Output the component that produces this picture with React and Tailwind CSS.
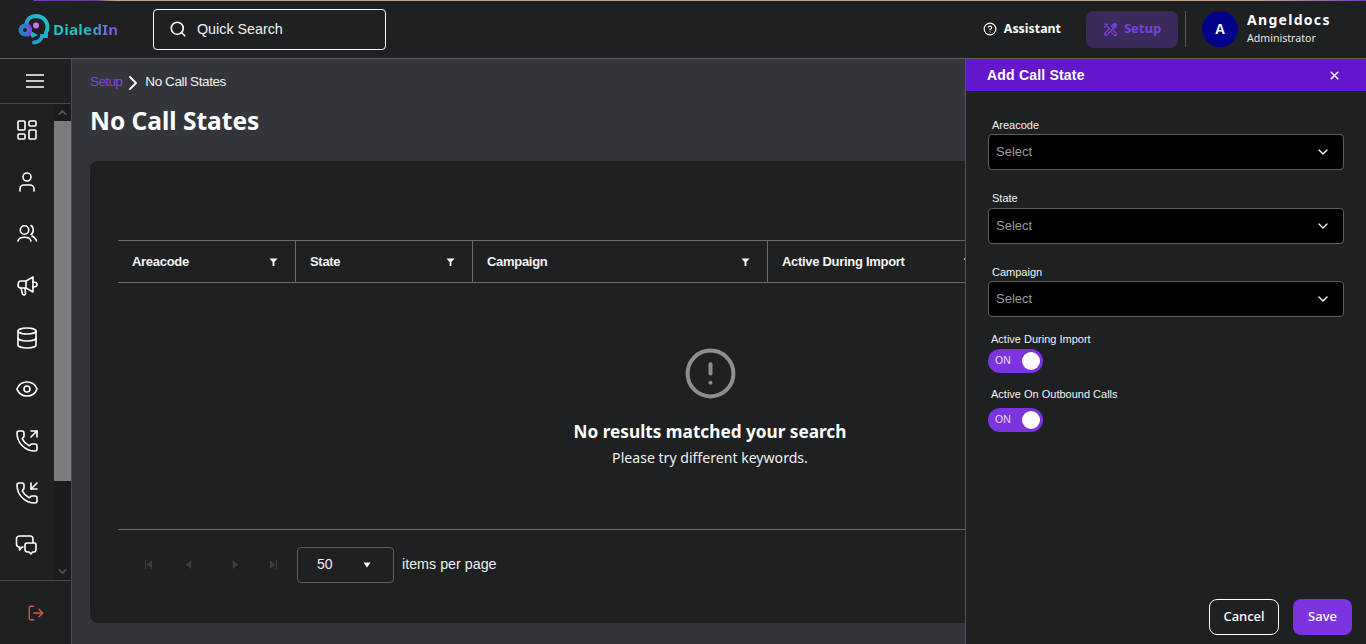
import React from "react";
import {
  Search, CircleHelp, LayoutDashboard, User, Database, Eye,
  PhoneOutgoing, PhoneIncoming, LogOut, ChevronRight, ChevronDown, ChevronUp,
  X, CircleAlert,
} from "lucide-react";

const arial = "font-['Liberation_Sans',Arial,sans-serif]";
const ubuntu = "font-['Noto_Sans',sans-serif]";

function Logo() {
  return (
    <svg width="32" height="31" viewBox="0 0 32 31" fill="none">
      <defs>
        <linearGradient id="lg" x1="0" y1="1" x2="1" y2="0">
          <stop offset="0" stopColor="#2f8fd0" />
          <stop offset="1" stopColor="#1cc5c9" />
        </linearGradient>
      </defs>
      <path d="M8 11 C9 5 13 2 18 2 C25 2 29.500 7 29.500 13 C29.500 15 29 17 28 18.500 L28 22 L24 22 C23.500 25 21 28 16 28.500" stroke="url(#lg)" strokeWidth="3.800" strokeLinecap="round" />
      <path d="M9 15 L20 21 L14 24 Z" fill="#1cb5c9" />
      <circle cx="7" cy="16" r="6.500" fill="#2d7fc4" />
      <path d="M9 10.500 A6 6 0 0 1 9 21.500" stroke="#8b3fe0" strokeWidth="3" />
      <circle cx="18" cy="11.500" r="3" fill="#c678f0" />
      <circle cx="7" cy="16" r="2" fill="#1e2022" />
    </svg>
  );
}

function DrawnIcon({ children }) {
  return (
    <svg width="24" height="24" viewBox="0 0 24 24" fill="none" stroke="currentColor" strokeWidth="1.6" strokeLinecap="round" strokeLinejoin="round" className="text-white">
      {children}
    </svg>
  );
}

const UsersIcon = () => (
  <DrawnIcon>
    <circle cx="9.500" cy="8" r="4.200" />
    <path d="M3 19 C4 14 15 14 16 19" />
    <path d="M16 3.500 C19 5 19 11 16 12.500" />
    <path d="M17 14 C19 15 21 17 21.500 19" />
  </DrawnIcon>
);

const MegaphoneIcon = () => (
  <DrawnIcon>
    <path d="M3.500 9 C3.500 7.500 5 7 6 7 L11 7 L18 3 L18 18 L11 14 L6 14 C4 14 3 13 3 11 Z" />
    <path d="M18 8 C21 8 22 9 22 10.500 C22 12 21 13 18 13" />
    <path d="M6 14 L7.500 20 C8 21.500 10.500 21 10.500 19.500 L10 14" />
    <path d="M11 7 V14" />
  </DrawnIcon>
);

const ChatIcon = () => (
  <DrawnIcon>
    <path d="M8 14 H7 L4.500 17 V14 C3 14 1.500 13 1.500 11 V6 C1.500 4 3 3 5 3 H15 C17 3 18 4 18 6 V9.500" />
    <path d="M12 10 C11 10 10 11 10 12 V16 C10 18 11 19 12.500 19 H14 L16 21 L17.500 19 H19 C20.500 19 21 18 21 16 V12 C21 11 20.500 10 19.500 10 Z" />
  </DrawnIcon>
);

function SideIcon({ children }) {
  return <div className="h-[51.9px] flex items-center justify-center shrink-0">{children}</div>;
}

function Funnel() {
  return (
    <svg width="9" height="10" viewBox="0 0 10 10" className="text-white">
      <path d="M0.500 1 H9.500 L6 5 V9.500 L4 9.500 V5 Z" fill="currentColor" />
    </svg>
  );
}

function HeadCell({ label, className }) {
  return (
    <div className={`h-full flex items-center justify-between shrink-0 border-r border-[#6b6c70] pl-[14px] pr-[17px] ${className}`}>
      <span className={`${arial} text-[13px] tracking-[-0.3px] font-bold text-[#f4f4f4]`}>{label}</span>
      <Funnel />
    </div>
  );
}

function PagerBtn({ d, className }) {
  return (
    <svg width="7" height="9" viewBox="0 0 9 10" preserveAspectRatio="none" className={`text-[#3d3e42] ${className}`}>
      <path d={d} fill="currentColor" />
    </svg>
  );
}

function SelectField({ label, mt, gap }) {
  return (
    <div className={mt}>
      <label className={`${arial} block text-[11px] text-[#f2f2f2] pl-[4px] leading-[13px] ${gap}`}>{label}</label>
      <div className="h-[36px] w-[356px] bg-black border border-[#5c5d60] rounded-[4px] flex items-center justify-between pl-[7px] pr-[12px]">
        <span className={`${arial} text-[13px] text-[#9a9a9a]`}>Select</span>
        <ChevronDown size={16} strokeWidth={2} className="text-white" />
      </div>
    </div>
  );
}

function Toggle({ label, mt, gap }) {
  return (
    <div className={mt}>
      <label className={`${arial} block text-[11px] text-[#f2f2f2] pl-[3px] leading-[13px] ${gap}`}>{label}</label>
      <div className="h-[24px] w-[55px] rounded-full bg-[#7c34e0] flex items-center justify-between pl-[7px] pr-[2px]">
        <span className={`${arial} text-[10.5px] text-[#e6dcf5]`}>ON</span>
        <span className="w-[18px] h-[18px] mr-[1px] rounded-full bg-white" />
      </div>
    </div>
  );
}

export default function App() {
  return (
    <div className="relative h-[644px] w-[1366px] overflow-hidden bg-[#34353a] text-white flex flex-col">
      {/* top bar */}
      <header className="relative h-[59px] shrink-0 bg-[#1e2022] border-b border-[#5d5e62] flex items-center">
        <div className="absolute top-0 left-0 right-0 h-px bg-[linear-gradient(90deg,#1e2022_0%,#1e2022_2.4%,#7a3bb8_2.5%,#6a3a8c_7%,#c9a58f_8.5%,#c9a58f_92%,#7a3bb8_100%)]" />
        <div className="flex items-center ml-[18px] w-[135px] shrink-0">
          <Logo />
          <span className={`${ubuntu} text-[15px] font-bold tracking-[0.3px] ml-[3px] bg-[linear-gradient(90deg,#1cc5c9_45%,#8b4fe0_95%)] bg-clip-text text-transparent`}>DialedIn</span>
        </div>
        <div className="w-[233px] h-[41px] border border-white rounded-[4px] flex items-center pl-[15px] gap-[10px]">
          <Search size={18} strokeWidth={2.2} className="text-white" />
          <span className={`${arial} text-[14.3px] pt-[2px] text-[#f0f0f0]`}>Quick Search</span>
        </div>
        <div className="ml-auto flex items-center">
          <CircleHelp size={14} strokeWidth={2} className="text-white" />
          <span className={`${ubuntu} text-[12.4px] font-bold ml-[7px] text-white`}>Assistant</span>
          <div className="ml-[25px] w-[92px] h-[37px] rounded-[8px] bg-[#3b2a5c] flex items-center justify-center gap-[6px] text-[#7f3fe0]">
            <svg width="15" height="15" viewBox="0 0 24 24" fill="none" stroke="currentColor" strokeWidth="2" strokeLinecap="round" strokeLinejoin="round">
              <path d="M3 3 L11 11 M8 3 L3 8 M14 17 L18 21 C19 22 21 22 21.500 21 C22 20 22 19 21 18 L17 14" />
              <path d="M15 9 L20 4 M14 7 C14 4 17 2 20 3 L17 6 L18 7 L21 4 C22 7 20 10 17 10 L6 21 L3 21 L3 18 L10 11" />
            </svg>
            <span className={`${ubuntu} text-[13px] font-bold`}>Setup</span>
          </div>
          <div className="ml-[7px] w-px h-[36px] bg-[#55565a]" />
          <div className="ml-[16px] w-[36px] h-[36px] rounded-full bg-[#00008b] flex items-center justify-center">
            <span className={`${arial} text-[14px] font-bold`}>A</span>
          </div>
          <div className="ml-[9px] w-[119px] flex flex-col">
            <span className={`${ubuntu} text-[14px] font-bold tracking-[1.3px] leading-[18px] -mt-[1px]`}>Angeldocs</span>
            <span className={`${ubuntu} text-[10.6px] text-[#e8e8e8] leading-[16px] mt-[1px]`}>Administrator</span>
          </div>
        </div>
      </header>

      <div className="flex flex-1 min-h-0">
        {/* sidebar */}
        <aside className="w-[72px] shrink-0 bg-[#1e2022] border-r border-[#4a4b4f] flex flex-col">
          <div className="h-[45px] shrink-0 border-b border-[#4a4b4f] flex items-center justify-center">
            <svg width="20" height="14" viewBox="0 0 20 14" fill="none" stroke="white" strokeWidth="1.500" className="-ml-[1px]">
              <path d="M1 1 H19 M1 7 H19 M1 13 H19" />
            </svg>
          </div>
          <div className="h-[476px] shrink-0 flex">
            <div className="w-[54px] flex flex-col">
              <SideIcon><LayoutDashboard size={24} strokeWidth={1.6} className="text-white" /></SideIcon>
              <SideIcon><User size={24} strokeWidth={1.6} className="text-white" /></SideIcon>
              <SideIcon><UsersIcon /></SideIcon>
              <SideIcon><MegaphoneIcon /></SideIcon>
              <SideIcon><Database size={24} strokeWidth={1.6} className="text-white" /></SideIcon>
              <SideIcon><Eye size={24} strokeWidth={1.6} className="text-white" /></SideIcon>
              <SideIcon><PhoneOutgoing size={24} strokeWidth={1.6} className="text-white" /></SideIcon>
              <SideIcon><PhoneIncoming size={24} strokeWidth={1.6} className="text-white" /></SideIcon>
              <SideIcon><ChatIcon /></SideIcon>
            </div>
            <div className="w-[17px] bg-[#1a1b1e] flex flex-col">
              <div className="h-[17px] flex items-center justify-center"><ChevronUp size={13} strokeWidth={3} className="text-[#55565a]" /></div>
              <div className="h-[360px] bg-[#7c7c7e]" />
              <div className="mt-auto h-[17px] flex items-center justify-center"><ChevronDown size={13} strokeWidth={3} className="text-[#55565a]" /></div>
            </div>
          </div>
          <div className="flex-1 border-t border-[#4a4b4f] flex items-center justify-center">
            <LogOut size={18} strokeWidth={1.8} className="text-[#d9583f]" />
          </div>
        </aside>

        {/* main */}
        <main className="flex-1 min-w-0 px-[18px]">
          <div className="h-[45px] pt-[2px] flex items-center">
            <span className={`${arial} text-[13.5px] tracking-[-0.6px] text-[#7f45dd]`}>Setup</span>
            <ChevronRight size={24} strokeWidth={1.8} className="text-white -ml-[1px]" />
            <span className={`${arial} text-[13.5px] tracking-[-0.4px] text-[#f2f2f2]`}>No Call States</span>
          </div>
          <h1 className={`${ubuntu} text-[24.5px] font-bold leading-[36px] -mt-[1px] text-white`}>No Call States</h1>
          <div className="mt-[22px] h-[462px] w-[1256px] rounded-[8px] bg-[#1e2022] px-[28px] pt-[79px]">
            <div className="h-[43px] shrink-0 border-y border-[#6b6c70] flex items-center">
              <HeadCell label="Areacode" className="w-[178px]" />
              <HeadCell label="State" className="w-[177px]" />
              <HeadCell label="Campaign" className="w-[295px]" />
              <HeadCell label="Active During Import" className="w-[222px]" />
            </div>
            <div className="h-[246px] flex flex-col items-center pt-[63px] w-[1184px]">
              <CircleAlert size={55} strokeWidth={1.75} className="text-[#8e8e8e]" />
              <span className={`${ubuntu} text-[17.2px] font-bold leading-[24px] mt-[19px] text-white whitespace-nowrap`}>No results matched your search</span>
              <span className={`${ubuntu} text-[14.1px] leading-[20px] mt-[4px] text-[#f0f0f0] whitespace-nowrap`}>Please try different keywords.</span>
            </div>
            <div className="border-t border-[#6b6c70] h-[70px] flex items-center pl-[27px]">
              <PagerBtn d="M0 0 H1.500 V10 H0 Z M9 0 V10 L2 5 Z" />
              <PagerBtn d="M8 0 V10 L1 5 Z" className="ml-[33px]" />
              <PagerBtn d="M1 0 V10 L8 5 Z" className="ml-[40px]" />
              <PagerBtn d="M0 0 V10 L7 5 Z M7.500 0 H9 V10 H7.500 Z" className="ml-[31px]" />
              <div className="ml-[20px] w-[97px] h-[36px] border border-[#5c5d60] rounded-[4px] flex items-center pl-[19px]">
                <span className={`${arial} text-[14px] text-[#f0f0f0]`}>50</span>
                <svg width="8" height="6" viewBox="0 0 8 6" className="ml-[30px]"><path d="M0.500 0.500 H7.500 L4 5.500 Z" fill="white" /></svg>
              </div>
              <span className={`${arial} text-[14.3px] text-[#f0f0f0] ml-[8px]`}>items per page</span>
            </div>
          </div>
        </main>
      </div>

      {/* drawer */}
      <div className="absolute top-[59px] right-0 bottom-0 w-[401px] bg-[#1e2022] border-l border-[#55565a] flex flex-col">
        <div className="h-[32px] shrink-0 bg-[#6416cf] flex items-center justify-between pl-[21px] pr-[25px]">
          <span className={`${arial} text-[14px] font-bold tracking-[0.2px] text-white`}>Add Call State</span>
          <X size={13} strokeWidth={3} className="text-white" />
        </div>
        <div className="flex-1 pl-[22px] pt-[28px]">
          <SelectField label="Areacode" gap="mb-[2px]" />
          <SelectField label="State" mt="mt-[22px]" gap="mb-[3px]" />
          <SelectField label="Campaign" mt="mt-[22px]" gap="mb-[2px]" />
          <Toggle label="Active During Import" mt="mt-[16px]" gap="mb-[3px]" />
          <Toggle label="Active On Outbound Calls" mt="mt-[15px]" gap="mb-[7px]" />
        </div>
        <div className="h-[45px] shrink-0 flex items-start justify-end gap-[14px] pr-[14px]">
          <button className={`${ubuntu} w-[70px] h-[36px] rounded-[8px] border border-white text-[13px] font-medium text-white`}>Cancel</button>
          <button className={`${ubuntu} w-[59px] h-[36px] rounded-[8px] bg-[#7c34e0] text-[13px] font-medium text-white`}>Save</button>
        </div>
      </div>
    </div>
  );
}
